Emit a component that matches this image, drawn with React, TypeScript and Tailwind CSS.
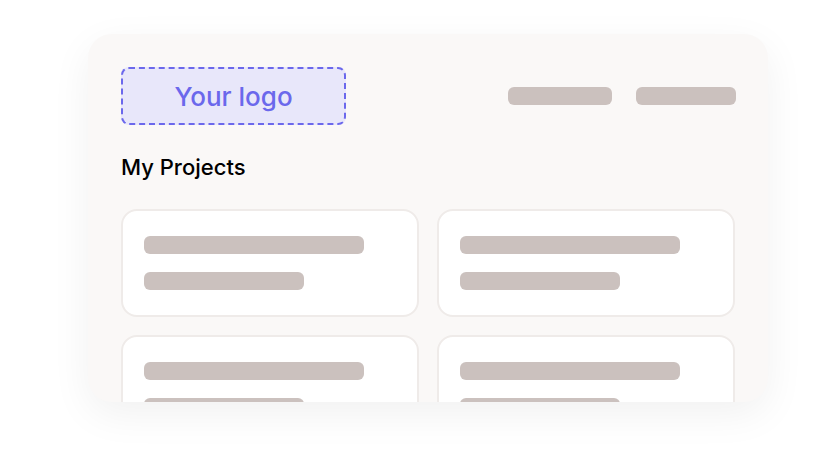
const ProjectCard = () => {
  return (
    <div className="h-[108px] rounded-2xl border-2 border-[#efebe9] bg-white pl-[21px] pt-[25px]">
      <div className="h-[18px] w-[220px] rounded-md bg-[#cbc1be]" />
      <div className="mt-[18px] h-[18px] w-[160px] rounded-md bg-[#cbc1be]" />
    </div>
  );
};

export default function App() {
  const cards = [1, 2, 3, 4];

  return (
    <div
      className="h-[464px] w-[840px] bg-white pl-[88px] pt-[34px]"
      style={{ fontFamily: "Inter, 'Open Sans', sans-serif" }}
    >
      <div className="h-[368px] w-[680px] overflow-hidden rounded-3xl bg-[#faf8f7] pl-[33px] pr-8 pt-[33px] shadow-[0_12px_40px_rgba(0,0,0,0.06)]">
        <div className="flex items-center justify-between">
          <div className="flex h-[58px] w-[225px] items-center justify-center rounded-lg border-2 border-dashed border-[#6b68ec] bg-[#e8e7fa]">
            <span className="text-[26px] font-medium text-[#6b68ec]">Your logo</span>
          </div>
          <div className="flex gap-6">
            <div className="h-[18px] w-[104px] rounded-md bg-[#cbc1be]" />
            <div className="h-[18px] w-[100px] rounded-md bg-[#cbc1be]" />
          </div>
        </div>

        <h1 className="mt-[28px] text-[22px] font-medium leading-[28px] text-black">My Projects</h1>

        <div className="mt-[28px] grid grid-cols-[298px_298px] gap-[18px]">
          {cards.map((c) => (
            <ProjectCard key={c} />
          ))}
        </div>
      </div>
    </div>
  );
}
